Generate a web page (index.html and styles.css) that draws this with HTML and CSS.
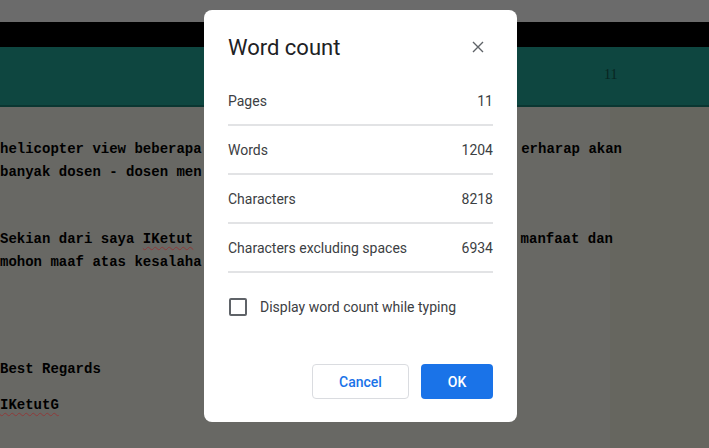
FILE: index.html
```html
<!DOCTYPE html>
<html lang="en">
<head>
  <meta charset="UTF-8" />
  <meta name="viewport" content="width=device-width, initial-scale=1.0"/>
  <title>Word count</title>
  <link rel="stylesheet" href="styles.css">
</head>
<body>

  <div class="top-strip"></div>
  <div class="toolbar"></div>
  <div class="header-band">
    <span class="page-num">11</span>
  </div>

  <div class="page">
    <div class="para first">
      <div class="line"><span class="left">helicopter view beberapa</span><span class="right r-akan">erharap akan</span></div>
      <div class="line"><span class="left">banyak dosen - dosen men</span></div>
    </div>
    <div class="para second">
      <div class="line"><span class="left">Sekian dari saya <span class="typo">IKetut</span></span><span class="right r-dan">manfaat dan</span></div>
      <div class="line"><span class="left">mohon maaf atas kesalaha</span></div>
    </div>
    <div class="para third">
      <div class="line"><span class="left">Best Regards</span></div>
    </div>
    <div class="para fourth">
      <div class="line"><span class="left"><span class="typo">IKetutG</span></span></div>
    </div>
  </div>

  <div class="dialog">
    <div class="dialog-head">
      <h2>Word count</h2>
      <button class="close" aria-label="Close">
        <svg width="12" height="12" viewBox="0 0 12 12">
          <path d="M1 1 L11 11 M11 1 L1 11" stroke="#5f6368" stroke-width="1.4" fill="none"/>
        </svg>
      </button>
    </div>

    <div class="stats">
      <div class="stat-row"><span>Pages</span><span>11</span></div>
      <div class="stat-row"><span>Words</span><span>1204</span></div>
      <div class="stat-row"><span>Characters</span><span>8218</span></div>
      <div class="stat-row"><span>Characters excluding spaces</span><span>6934</span></div>
    </div>

    <label class="check-row">
      <span class="checkbox"></span>
      <span>Display word count while typing</span>
    </label>

    <div class="dialog-buttons">
      <button class="cancel">Cancel</button>
      <button class="ok">OK</button>
    </div>
  </div>

</body>
</html>
```

FILE: styles.css
```css
body {
  margin: 0;
  padding: 0;
  width: 709px;
  height: 448px;
  overflow: hidden;
  background-color: #66665f;
  font-family: Roboto, Arial, sans-serif;
}

.top-strip {
  height: 22px;
  background-color: #6b6b6b;
}

.toolbar {
  height: 25px;
  background-color: #000;
}

.header-band {
  height: 58px;
  background-color: #0e4640;
  border-bottom: 2px solid #0a3631;
  position: relative;
}

.header-band .page-num {
  position: absolute;
  left: 604px;
  top: 20px;
  font-family: "Liberation Serif", serif;
  font-size: 14px;
  color: #082521;
}

.page {
  height: 341px;
  box-sizing: border-box;
  padding-top: 31px;
  background: linear-gradient(to right, #686864 610px, #66665f 610px);
}

.para {
  font-family: "Liberation Mono", "Courier New", monospace;
  font-weight: bold;
  font-size: 14px;
  line-height: 23px;
  color: #000;
}

.line {
  display: flex;
  white-space: pre;
  height: 23px;
}

.line .right {
  margin-left: auto;
}

.r-akan {
  padding-right: 87px;
}

.r-dan {
  padding-right: 96px;
}

.para.first {
  margin-bottom: 44px;
}

.para.second {
  margin-bottom: 84px;
}

.para.third {
  margin-bottom: 13px;
}

.typo {
  text-decoration: underline wavy #8e3a3a;
  text-decoration-thickness: 1px;
  text-underline-offset: 3px;
}

.dialog {
  position: absolute;
  left: 204px;
  top: 10px;
  width: 313px;
  height: 412px;
  box-sizing: border-box;
  padding: 23px 24px 23px 24px;
  background-color: #fff;
  border-radius: 8px;
  display: flex;
  flex-direction: column;
}

.dialog-head {
  display: flex;
  justify-content: space-between;
  align-items: center;
  height: 28px;
}

.dialog-head h2 {
  margin: 0;
  font-size: 22px;
  font-weight: 400;
  color: #202124;
}

.close {
  background: none;
  border: none;
  padding: 0;
  margin-right: 9px;
  width: 12px;
  height: 12px;
  display: flex;
  cursor: pointer;
}

.stats {
  margin-top: 16px;
}

.stat-row {
  height: 47px;
  display: flex;
  justify-content: space-between;
  align-items: center;
  border-bottom: 2px solid #e2e3e5;
  font-size: 14px;
  color: #3c4043;
}

.check-row {
  display: flex;
  align-items: center;
  gap: 13px;
  margin-top: 24px;
  height: 20px;
  font-size: 14px;
  color: #3c4043;
}

.checkbox {
  width: 14px;
  height: 14px;
  margin-left: 1px;
  border: 2px solid #5f6368;
  border-radius: 2px;
}

.dialog-buttons {
  margin-top: auto;
  display: flex;
  justify-content: flex-end;
  gap: 12px;
}

.dialog-buttons button {
  height: 35px;
  border-radius: 4px;
  font-family: Roboto, Arial, sans-serif;
  font-size: 14px;
  font-weight: 500;
  cursor: pointer;
}

.cancel {
  width: 97px;
  background-color: #fff;
  color: #1a73e8;
  border: 1px solid #dadce0;
}

.ok {
  width: 72px;
  background-color: #1a73e8;
  color: #fff;
  border: none;
}
```
